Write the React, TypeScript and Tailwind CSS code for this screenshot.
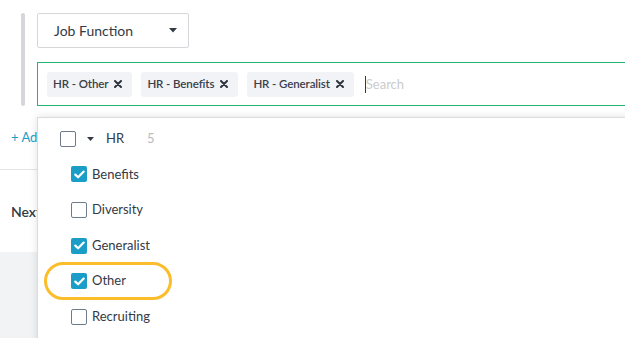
import React from "react";

function Check({ checked }: { checked: boolean }) {
  if (checked) {
    return (
      <span className="flex h-4 w-4 shrink-0 items-center justify-center rounded-[2px] bg-[#1a9ec7]">
        <svg width="11" height="9" viewBox="0 0 11 9" fill="none">
          <path d="M1.3 4.6 L4.1 7.3 L9.7 1.6" stroke="white" strokeWidth="2.2" strokeLinecap="round" strokeLinejoin="round" />
        </svg>
      </span>
    );
  }
  return <span className="block h-4 w-4 shrink-0 rounded-[2px] border-[1.5px] border-[#6f7b8b] bg-white" />;
}

function Chip({ label }: { label: string }) {
  return (
    <div className="flex h-[25px] items-center gap-[6px] rounded-[3px] bg-[#f1f3f6] pl-[6px] pr-[10px] text-[11.5px] font-semibold tracking-[-0.1px] text-[#3a3f4a]">
      <span>{label}</span>
      <svg width="8" height="8" viewBox="0 0 8 8">
        <path d="M1 1 L7 7 M7 1 L1 7" stroke="#2f3440" strokeWidth="2" strokeLinecap="round" />
      </svg>
    </div>
  );
}

const items = [
  { label: "Benefits", checked: true },
  { label: "Diversity", checked: false },
  { label: "Generalist", checked: true },
  { label: "Other", checked: true, highlight: true },
  { label: "Recruiting", checked: false },
];

export default function App() {
  return (
    <div className="relative flex h-[338px] w-[625px] flex-col overflow-hidden bg-white font-['Lato',sans-serif] text-[#333a45]">
      <div className="flex gap-3 pl-[21px] pt-[13px]">
        <div className="w-1 shrink-0 rounded-full bg-[#d5d6d9]" />
        <div className="flex flex-col gap-[14px]">
          <div className="flex h-[35px] w-[152px] items-center justify-between rounded-[2px] border border-[#d6d7da] pl-[16px] pr-[11px] text-[14px] text-[#333a45]">
            <span>Job Function</span>
            <svg width="8" height="5" viewBox="0 0 8 5">
              <path d="M0 0 H8 L4 4.5 Z" fill="#333a45" />
            </svg>
          </div>
          <div className="flex h-[44px] w-[620px] items-center gap-[9px] border border-[#22b571] pl-[9px]">
            <Chip label="HR - Other" />
            <Chip label="HR - Benefits" />
            <Chip label="HR - Generalist" />
            <div className="ml-[2px] flex items-center pt-px">
              <span className="h-[17px] w-px bg-[#333a45]" />
              <span className="text-[13px] text-[#cbcbcb]">Search</span>
            </div>
          </div>
        </div>
      </div>
      <div className="flex h-[64px] items-center border-b border-[#e4e5e7] pl-[11px] text-[13px] text-[#1a9ec7]">
        + Add
      </div>
      <div className="flex h-[82px] items-center pl-[11px] text-[14px] font-semibold text-[#333a45]">Next</div>
      <div className="flex-1 bg-[#f2f3f5]" />

      <div className="absolute left-[37px] top-[117px] h-[240px] w-[600px] border border-[#dcdcdc] bg-white pt-[3px] shadow-[0_0_8px_rgba(0,0,0,0.12)]">
        <div className="flex h-[35.6px] items-center pl-[22px] text-[13px]">
          <Check checked={false} />
          <svg className="ml-[11px]" width="7" height="4" viewBox="0 0 7 4">
            <path d="M0 0 H7 L3.5 4 Z" fill="#333a45" />
          </svg>
          <span className="ml-[12px] text-[#333a45]">HR</span>
          <span className="ml-[23px] text-[#b8bcc2]">5</span>
        </div>
        {items.map((it) => (
          <div key={it.label} className="relative flex h-[35.6px] items-center gap-[5px] pl-[33px] text-[13px] text-[#333a45]">
            {it.highlight && (
              <span className="absolute left-[6px] top-[-1px] h-[38px] w-[128px] rounded-full border-[3.5px] border-[#fbbd2c]" />
            )}
            <Check checked={it.checked} />
            <span>{it.label}</span>
          </div>
        ))}
      </div>
    </div>
  );
}
